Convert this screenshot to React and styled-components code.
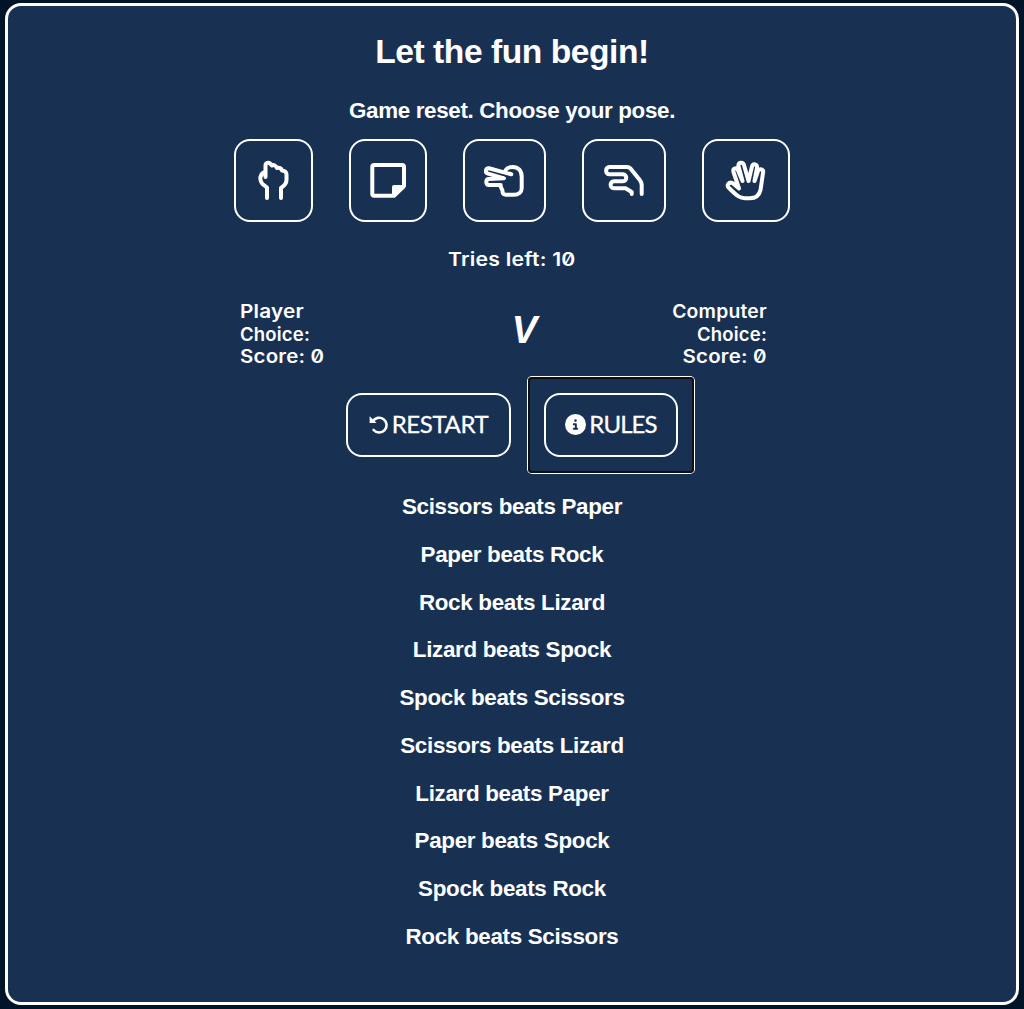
import React from 'react';
import styled, { createGlobalStyle } from 'styled-components';
import { FaCircleInfo } from 'react-icons/fa6';

const GlobalStyle = createGlobalStyle`
  * { box-sizing: border-box; }
  body {
    margin: 0;
    background: #001427;
    color: #fff;
    font-family: "Liberation Sans", Arial, sans-serif;
  }
`;

const Board = styled.main`
  display: flex;
  flex-direction: column;
  align-items: center;
  height: 1002px;
  margin: 3px 5px 4px;
  padding-top: 27px;
  border: 3px solid #fff;
  border-radius: 16px;
  background: #183153;
`;

const Title = styled.h1`
  margin: 0;
  font-size: 33.6px;
  line-height: 38px;
  letter-spacing: -0.45px;
  white-space: nowrap;
`;

const Message = styled.h2`
  margin: 27px 0 0;
  font-size: 22.4px;
  line-height: 26px;
  letter-spacing: -0.34px;
  white-space: nowrap;
`;

const Poses = styled.div`
  display: flex;
  gap: 36px;
  margin-top: 15px;
`;

const OutlineButton = styled.button`
  display: flex;
  align-items: center;
  justify-content: center;
  padding: 0;
  width: ${(p) => p.$width}px;
  height: ${(p) => p.$height}px;
  border: 2px solid #fff;
  border-radius: 16px;
  background: transparent;
  color: #fff;
`;

const PoseIcon = styled.svg`
  display: block;
  width: 42px;
  height: 42px;
  margin-right: ${(p) => p.$nudge}px;
  fill: none;
  stroke: currentColor;
  stroke-width: 4;
  stroke-linecap: round;
  stroke-linejoin: round;
`;

const RestartIcon = styled.svg`
  display: block;
  width: 20px;
  height: 20px;
  fill: none;
  stroke: currentColor;
  stroke-width: 2.6;
  stroke-linecap: round;
`;

const Techno = styled.div`
  font-family: Inter, "DejaVu Sans", sans-serif;
  font-weight: 600;
  font-size: 18.5px;
  line-height: 22.4px;
  letter-spacing: 0.2px;
  font-feature-settings: "zero";
  white-space: nowrap;
  transform: scaleX(${(p) => p.$stretch});
  transform-origin: ${(p) => p.$origin || 'center'};
`;

const Tries = styled.div`
  margin-top: 26px;
`;

const Scores = styled.div`
  display: grid;
  grid-template-columns: 1fr auto 1fr;
  align-items: center;
  width: 527px;
  margin: 30px 17px 0 0;
`;

const Side = styled.div`
  text-align: ${(p) => p.$align};
`;

const Versus = styled.div`
  font-size: 38px;
  font-weight: bold;
  font-style: italic;
  line-height: 40px;
  margin: 0 0 8px 42px;
`;

const Actions = styled.div`
  display: flex;
  align-items: center;
  gap: 16px;
  margin: 8px 0 0 17px;
`;

const FocusFrame = styled.div`
  padding: 14px;
  border: 2px solid #101010;
  border-radius: 4px;
  box-shadow: 0 0 0 1px #fff;
  margin: 1px;
`;

const ActionLabel = styled.span`
  margin-left: 3px;
  padding-bottom: 2px;
  font-family: Lato, sans-serif;
  font-size: 24px;
  line-height: 28px;
  letter-spacing: ${(p) => p.$spacing}px;
  -webkit-text-stroke: 0.3px currentColor;
`;

const Rules = styled.ul`
  display: flex;
  flex-direction: column;
  align-items: center;
  gap: 21.77px;
  margin: 20.35px 0 0;
  padding: 0;
  list-style: none;
  font-size: 22.4px;
  font-weight: bold;
  line-height: 26px;
  letter-spacing: -0.32px;
`;

const poses = [
  {
    name: 'Rock',
    width: 79,
    nudge: 3,
    shape: (
      <path d="M16 38V27.5L11.5 24C9.5 21.5 9 19 9.5 17C10 14 12 12.5 14.5 12M14.5 17V5.5C14.5 2.5 17.5 2 19 3.5L21 5.5C22.5 4.5 25 5.5 26 8C28 7 30.5 8.5 31 10.5C33.5 10.5 35.5 12 35.5 14.5V20C35.5 24 33 26 30 28V38" />
    ),
  },
  {
    name: 'Paper',
    width: 78,
    nudge: 1,
    shape: (
      <>
        <path d="M27 35.7H7.3Q5.3 35.7 5.3 33.7V7Q5.3 5 7.3 5H35Q37 5 37 7V26Z" />
        <path d="M27 27H36L27 35Z" fill="currentColor" />
      </>
    ),
  },
  {
    name: 'Scissors',
    width: 83,
    nudge: 1,
    shape: (
      <path d="M28.3 14.3L6 8.3C2.5 8 1.8 12.5 5 13.7L21 18.3L5.5 19C2.5 19.5 2.5 25 6 25H17.7C17 28 20 29 19.5 32Q20 34.7 22.7 34.7H31C35.5 34.7 38.7 32 38.7 28.3V16.7C38.7 11 35.5 7 29.5 7C26.5 7 24 8 22.7 10" />
    ),
  },
  {
    name: 'Lizard',
    width: 83.2,
    nudge: 1,
    shape: (
      <path d="M28.7 34V32L22.5 28.3H11C6.5 28.3 6.5 21.3 11 21.3H20C24.3 21.3 24.3 14.3 20 14.3H6.5C2 14.3 2 7 6.5 7H24Q26 7 27.5 8.5L36.8 20Q38.7 22.5 38.7 25V34" />
    ),
  },
  {
    name: 'Spock',
    width: 88,
    nudge: 2,
    shape: (
      <path d="M5 28C2 25.5 5 21.5 8.5 23L15 28.5L9.5 12C8.5 8 13 7 14 10.5L18.5 21L14.5 6C14 2 19 1.5 20 5L24.5 21L28 6.5C29 3 33.5 4 33 8L30.5 21L34 11C35.5 8 40 9 39 13L36.5 30C35 36 31 38.3 26 38.3H21C16 38.3 13 36 5 28Z" />
    ),
  },
];

const rules = [
  'Scissors beats Paper',
  'Paper beats Rock',
  'Rock beats Lizard',
  'Lizard beats Spock',
  'Spock beats Scissors',
  'Scissors beats Lizard',
  'Lizard beats Paper',
  'Paper beats Spock',
  'Spock beats Rock',
  'Rock beats Scissors',
];

export default function App() {
  return (
    <>
      <GlobalStyle />
      <Board>
        <Title>Let the fun begin!</Title>
        <Message>Game reset. Choose your pose.</Message>
        <Poses>
          {poses.map((pose) => (
            <OutlineButton key={pose.name} $width={pose.width} $height={83} aria-label={pose.name}>
              <PoseIcon $nudge={pose.nudge} viewBox="0 0 42 42">{pose.shape}</PoseIcon>
            </OutlineButton>
          ))}
        </Poses>
        <Tries>
          <Techno $stretch={1.145}>Tries left: 10</Techno>
        </Tries>
        <Scores>
          <Side $align="left">
            <Techno $stretch={1.12} $origin="left">Player</Techno>
            <Techno $stretch={1} $origin="left">Choice:</Techno>
            <Techno $stretch={1.105} $origin="left">Score: 0</Techno>
          </Side>
          <Versus>V</Versus>
          <Side $align="right">
            <Techno $stretch={1.044} $origin="right">Computer</Techno>
            <Techno $stretch={1} $origin="right">Choice:</Techno>
            <Techno $stretch={1.105} $origin="right">Score: 0</Techno>
          </Side>
        </Scores>
        <Actions>
          <OutlineButton $width={165} $height={64}>
            <RestartIcon viewBox="0 0 20 20">
              <path d="M3.8 6.4A7.4 7.4 0 1 1 4.6 15" />
              <path d="M.6 1.2L7.6 8H.6Z" fill="currentColor" stroke="none" />
            </RestartIcon>
            <ActionLabel $spacing={-0.4}>RESTART</ActionLabel>
          </OutlineButton>
          <FocusFrame>
            <OutlineButton $width={134} $height={64}>
              <FaCircleInfo size={21} />
              <ActionLabel $spacing={-0.9}>RULES</ActionLabel>
            </OutlineButton>
          </FocusFrame>
        </Actions>
        <Rules>
          {rules.map((rule) => (
            <li key={rule}>{rule}</li>
          ))}
        </Rules>
      </Board>
    </>
  );
}
